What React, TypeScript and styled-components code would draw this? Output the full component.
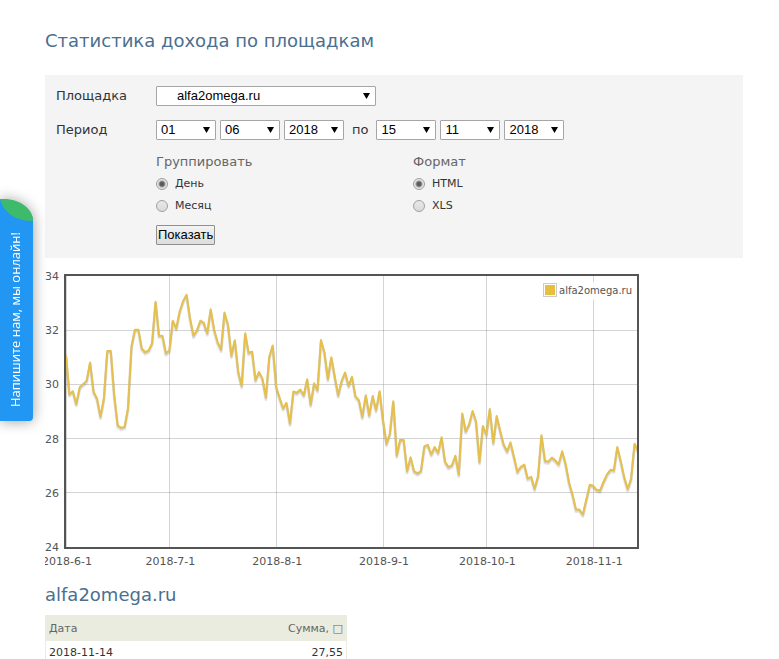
import React from "react";
import styled, { createGlobalStyle } from "styled-components";

const uiFont = '"DejaVu Sans", Verdana, sans-serif';
const controlFont = '"Liberation Sans", Arial, sans-serif';

const GlobalStyle = createGlobalStyle`
  * { box-sizing: border-box; }
  body {
    margin: 0;
    background: #fff;
    color: #333;
    font: 13px/18px ${uiFont};
  }
`;

const Page = styled.main`
  padding: 30px 36px 0 45px;
`;

const Title = styled.h1`
  margin: 0;
  color: #4b6f8f;
  font-size: 18px;
  line-height: 22px;
  font-weight: 400;
`;

const FilterForm = styled.form`
  display: flex;
  flex-direction: column;
  margin-top: 23px;
  padding: 11px 11px 13px;
  background: #f4f4f4;
`;

const FormRow = styled.div`
  display: grid;
  grid-template-columns: 100px 1fr;
  align-items: center;
  margin-bottom: 14px;
`;

const RowLabel = styled.label`
  font-size: 13px;
`;

const DateControls = styled.div`
  display: flex;
  align-items: center;
  gap: 4px;
`;

const Until = styled.span`
  padding: 0 4px;
`;

const SelectBox = styled.span<{ $wide?: boolean }>`
  display: inline-grid;
  align-items: center;
  width: ${(p) => (p.$wide ? "220px" : "60px")};
  & > * { grid-area: 1 / 1; }
`;

const SelectField = styled.select<{ $wide?: boolean }>`
  appearance: none;
  width: 100%;
  height: 20px;
  margin: 0;
  padding: 0 16px 0 ${(p) => (p.$wide ? "20px" : "4px")};
  border: 1px solid #a6a6a6;
  border-radius: 1px;
  background: #fff;
  color: #000;
  font: 13px/18px ${controlFont};
`;

const Arrow = styled.svg`
  justify-self: end;
  margin-right: 6px;
  pointer-events: none;
`;

const Choices = styled.div`
  display: grid;
  grid-template-columns: 257px 1fr;
  margin: -1px 0 0 100px;
`;

const ChoiceGroup = styled.fieldset`
  display: flex;
  flex-direction: column;
  margin: 0;
  padding: 0;
  border: 0;
`;

const GroupName = styled.legend`
  margin-bottom: 2px;
  padding: 0;
  color: #666;
`;

const Choice = styled.label`
  display: flex;
  align-items: center;
  gap: 7px;
  font-size: 11px;
  line-height: 22px;
`;

const Radio = styled.input`
  appearance: none;
  width: 12px;
  height: 12px;
  margin: 0;
  border: 1px solid #a0a0a0;
  border-radius: 50%;
  background: linear-gradient(#e8e8e8, #dadada);
  &:checked {
    background: radial-gradient(circle, #5c5c5c 0 2px, #e4e4e4 4px);
  }
`;

const SubmitButton = styled.button`
  align-self: flex-start;
  height: 20px;
  margin: 8px 0 0 100px;
  padding: 0 1px;
  border: 1px solid #8f8f8f;
  border-radius: 1px;
  background: linear-gradient(#f4f4f4, #dcdcdc);
  color: #000;
  font: 13px/18px ${controlFont};
`;

const ChartImage = styled.svg`
  display: block;
  margin-top: 8px;
  font-family: ${uiFont};
  fill: #545454;
`;

const SiteName = styled.h2`
  margin: 12px 0 9px;
  color: #4b6f8f;
  font-size: 18px;
  line-height: 22px;
  font-weight: 400;
`;

const StatTable = styled.table`
  width: 302px;
  border-collapse: collapse;
  border: 1px solid #e9ecdf;
  font-size: 11px;
  line-height: 17px;
`;

const HeadCell = styled.th<{ $right?: boolean }>`
  padding: 4px 3px;
  background: #e9ecdf;
  color: #666;
  font-weight: 400;
  text-align: ${(p) => (p.$right ? "right" : "left")};
`;

const Cell = styled.td<{ $right?: boolean }>`
  padding: 6px 3px 0;
  line-height: 12px;
  text-align: ${(p) => (p.$right ? "right" : "left")};
`;

const ChatTab = styled.button`
  position: fixed;
  top: 199px;
  left: 0;
  display: flex;
  flex-direction: column;
  align-items: center;
  padding: 0 0 14px;
  border: 0;
  border-radius: 0 33px 4px 0 / 0 22px 4px 0;
  background: #2196f3;
  box-shadow: 0 0 14px rgba(0, 0, 0, 0.4);
  color: #fff;
`;

const Leaf = styled.svg`
  display: block;
  margin-bottom: 11px;
`;

const ChatText = styled.span`
  writing-mode: vertical-rl;
  transform: rotate(180deg);
  margin-right: 4px;
  font: 500 13px/18px "Open Sans", "Noto Sans", sans-serif;
  white-space: nowrap;
`;

const dailyIncome = [
  31.09, 29.64, 29.75, 29.28, 29.9, 30.01, 30.14, 30.81, 29.73, 29.48, 28.81, 29.48, 31.23, 31.23, 29.6,
  28.49, 28.4, 28.43, 29.11, 31.4, 32.02, 32.02, 31.33, 31.19, 31.26, 31.52, 33.05, 31.8, 31.79, 31.15,
  31.25, 32.35, 32.07, 32.69, 33.09, 33.31, 32.44, 31.8, 31.99, 32.35, 32.27, 31.89, 32.77, 32.01, 31.56,
  31.28, 32.65, 32.2, 31.06, 31.63, 30.44, 29.95, 31.89, 31.17, 31.21, 30.16, 30.46, 30.22, 29.52, 31.02,
  31.44, 29.91, 29.51, 29.12, 29.32, 28.56, 29.74, 29.69, 29.81, 29.6, 30.19, 29.26, 30.04, 29.79, 31.64,
  31.19, 30.2, 31.0, 30.28, 29.6, 30.14, 30.44, 29.95, 30.28, 29.57, 29.42, 28.8, 29.6, 28.86, 29.57,
  29.05, 29.75, 28.68, 27.81, 28.19, 29.38, 27.38, 27.96, 27.95, 26.8, 27.31, 26.8, 26.72, 26.8, 27.72,
  27.77, 27.42, 27.69, 27.48, 28.05, 27.16, 26.95, 27.01, 27.37, 26.68, 28.93, 28.27, 28.53, 29.02, 28.64,
  27.14, 28.47, 28.15, 29.09, 27.85, 28.83, 28.28, 27.79, 27.53, 27.86, 27.32, 26.77, 26.96, 27.04, 26.53,
  26.59, 26.15, 26.62, 28.12, 27.17, 27.16, 27.3, 27.2, 27.05, 27.53, 27.07, 26.37, 25.94, 25.38, 25.38,
  25.2, 25.75, 26.3, 26.26, 26.11, 26.09, 26.4, 26.68, 26.85, 26.83, 27.69, 27.16, 26.58, 26.14, 26.52,
  27.81, 27.55,
];

const months = [
  { day: 0, text: "2018-6-1" },
  { day: 30, text: "2018-7-1" },
  { day: 61, text: "2018-8-1" },
  { day: 92, text: "2018-9-1" },
  { day: 122, text: "2018-10-1" },
  { day: 153, text: "2018-11-1" },
];

const plot = { left: 21, top: 10, width: 572, height: 271 };
const xOf = (day: number) => plot.left + (day * plot.width) / (dailyIncome.length - 1);
const yOf = (value: number) => plot.top + ((34 - value) * plot.height) / 10;
const linePoints = dailyIncome.map((v, i) => `${xOf(i).toFixed(1)},${yOf(v).toFixed(1)}`).join(" ");

function IncomeChart() {
  return (
    <ChartImage width="600" height="306" viewBox="0 0 600 306" role="img" aria-label="alfa2omega.ru">
      <defs>
        <clipPath id="plotArea">
          <rect x={plot.left - 1} y={plot.top} width={plot.width + 1} height={plot.height} />
        </clipPath>
      </defs>
      <g stroke="#545454" strokeOpacity="0.25" shapeRendering="crispEdges">
        {months.map((m) => (
          <line key={m.day} x1={xOf(m.day)} x2={xOf(m.day)} y1={plot.top} y2={plot.top + plot.height} />
        ))}
        {[32, 30, 28, 26].map((v) => (
          <line key={v} x1={plot.left} x2={plot.left + plot.width} y1={yOf(v)} y2={yOf(v)} />
        ))}
      </g>
      <g clipPath="url(#plotArea)" fill="none" strokeLinejoin="round">
        <polyline points={linePoints} transform="translate(0 2)" stroke="#000" strokeOpacity="0.1" strokeWidth="3" />
        <polyline points={linePoints} transform="translate(0 1)" stroke="#000" strokeOpacity="0.1" strokeWidth="2" />
        <polyline points={linePoints} stroke="#e5c04e" strokeWidth="2" />
      </g>
      <rect x="20" y="9" width="573" height="273" fill="none" stroke="#545454" strokeWidth="2" />
      <rect x="496" y="16" width="92" height="18" fill="#fff" fillOpacity="0.85" />
      <rect x="498.5" y="17.5" width="13" height="13" fill="#fff" stroke="#ccc" />
      <rect x="500" y="19" width="10" height="10" fill="#e8bf3c" />
      <text x="514" y="28" fontSize="10">alfa2omega.ru</text>
      {[34, 32, 30, 28, 26, 24].map((v) => (
        <text key={v} x="14" y={yOf(v) + 4} textAnchor="end" fontSize="11">{v}</text>
      ))}
      {months.map((m) => (
        <text key={m.day} x={xOf(m.day) + 1} y="299" textAnchor="middle" fontSize="11">{m.text}</text>
      ))}
    </ChartImage>
  );
}

type DropDownProps = { id?: string; name: string; label?: string; value: string; wide?: boolean };

function DropDown({ id, name, label, value, wide }: DropDownProps) {
  return (
    <SelectBox $wide={wide}>
      <SelectField id={id} name={name} aria-label={label} defaultValue={value} $wide={wide}>
        <option value={value}>{value}</option>
      </SelectField>
      <Arrow width="7" height="6" viewBox="0 0 7 6" aria-hidden="true">
        <path d="M0 0H7L3.5 6Z" fill="#000" />
      </Arrow>
    </SelectBox>
  );
}

type RadioGroupProps = { title: string; name: string; options: string[] };

function RadioGroup({ title, name, options }: RadioGroupProps) {
  return (
    <ChoiceGroup>
      <GroupName>{title}</GroupName>
      {options.map((option, i) => (
        <Choice key={option}>
          <Radio type="radio" name={name} value={option} defaultChecked={i === 0} />
          {option}
        </Choice>
      ))}
    </ChoiceGroup>
  );
}

export default function App() {
  return (
    <>
      <GlobalStyle />
      <Page>
        <Title>Статистика дохода по площадкам</Title>
        <FilterForm onSubmit={(e) => e.preventDefault()}>
          <FormRow>
            <RowLabel htmlFor="site">Площадка</RowLabel>
            <DropDown id="site" name="site" value="alfa2omega.ru" wide />
          </FormRow>
          <FormRow>
            <RowLabel htmlFor="from-day">Период</RowLabel>
            <DateControls>
              <DropDown id="from-day" name="fromDay" value="01" />
              <DropDown name="fromMonth" label="Месяц" value="06" />
              <DropDown name="fromYear" label="Год" value="2018" />
              <Until>по</Until>
              <DropDown name="toDay" label="День" value="15" />
              <DropDown name="toMonth" label="Месяц" value="11" />
              <DropDown name="toYear" label="Год" value="2018" />
            </DateControls>
          </FormRow>
          <Choices>
            <RadioGroup title="Группировать" name="group" options={["День", "Месяц"]} />
            <RadioGroup title="Формат" name="format" options={["HTML", "XLS"]} />
          </Choices>
          <SubmitButton type="submit">Показать</SubmitButton>
        </FilterForm>
        <IncomeChart />
        <SiteName>alfa2omega.ru</SiteName>
        <StatTable>
          <thead>
            <tr>
              <HeadCell scope="col">Дата</HeadCell>
              <HeadCell scope="col" $right>Сумма, □</HeadCell>
            </tr>
          </thead>
          <tbody>
            <tr>
              <Cell>2018-11-14</Cell>
              <Cell $right>27,55</Cell>
            </tr>
          </tbody>
        </StatTable>
      </Page>
      <ChatTab type="button">
        <Leaf width="33" height="22" viewBox="0 0 33 22" aria-hidden="true">
          <path d="M0 0H4C20 0 33 10 33 22C15 22 4 14 0 0Z" fill="#3dbb6b" />
        </Leaf>
        <ChatText>Напишите нам, мы онлайн!</ChatText>
      </ChatTab>
    </>
  );
}
